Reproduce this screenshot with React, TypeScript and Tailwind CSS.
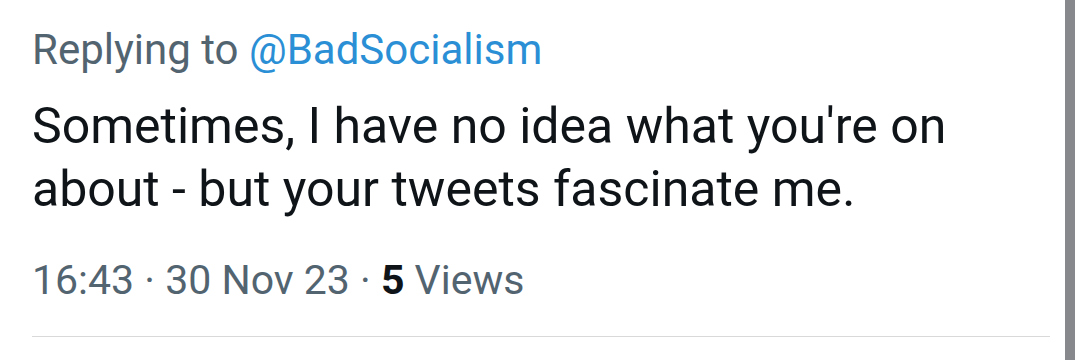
export default function App() {
  return (
    <div className="flex h-[360px] w-[1080px] overflow-hidden bg-white" style={{ fontFamily: "Roboto, 'Noto Sans', sans-serif" }}>
      {/* Tweet detail */}
      <div className="flex flex-1 flex-col pl-[32px] pr-[15px]">
        <div className="mt-[25px] text-[42px] leading-[50px] text-[#536471]">
          Replying to <span className="text-[#2b8fd6]">@BadSocialism</span>
        </div>
        <p className="mt-[20px] text-[50px] leading-[63px] text-[#0f1419]">
          Sometimes, I have no idea what you're on
          <br />
          about - but your tweets fascinate me.
        </p>
        <div className="mt-[34px] text-[41px] leading-[50px] text-[#536471]">
          16:43 · 30 Nov 23 · <span className="font-bold text-[#0f1419]">5</span> Views
        </div>
        <div className="mt-[31px] h-px bg-[#d9d9d9]"></div>
      </div>

      {/* Scrollbar */}
      <div className="w-[10px] bg-[#86888b]"></div>
      <div className="w-[5px]"></div>
    </div>
  );
}
